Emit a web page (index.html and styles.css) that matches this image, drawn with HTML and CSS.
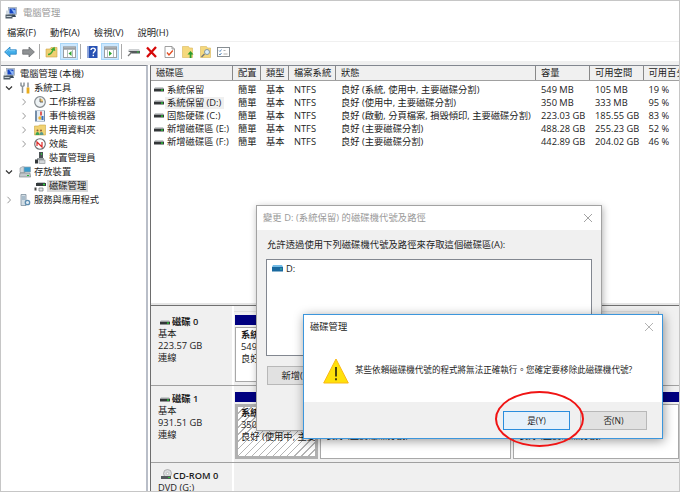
FILE: index.html
```html
<!DOCTYPE html>
<html lang="zh-Hant">
<head>
    <meta charset="UTF-8">
    <meta name="viewport" content="width=device-width, initial-scale=1.0">
    <title>電腦管理</title>
    <link rel="stylesheet" href="styles.css">
</head>
<body>
    <svg class="defs" width="0" height="0">
        <symbol id="computer" viewBox="0 0 12 12">
            <rect x="3.5" y=".5" width="8" height="7" fill="#c9d3dc" stroke="#8998a5" stroke-width=".6"/>
            <rect x="4.5" y="1.5" width="6" height="5" fill="#1747c4"/>
            <path d="M6 1.5l3 5h1.500v-3z" fill="#8bb5f4"/>
            <path d="M7 7.500h3l1 2.500h-4z" fill="#374859"/>
            <path d="M1 3.500h3v4h-3z" fill="#cfd9e2"/>
            <rect x=".5" y="7.500" width="7" height="4" fill="#4f5d68"/>
            <path d="M1.500 9.500h5" stroke="#c8d2d8"/>
        </symbol>
        <symbol id="drive" viewBox="0 0 10 5">
            <path d="M1 0h8l1 2H0z" fill="#c9cccd"/>
            <rect y="1.700" width="10" height="2.800" fill="#333638"/>
            <rect x="7" y="2.400" width="2" height="1.300" fill="#27d836"/>
        </symbol>
        <symbol id="down" viewBox="0 0 8 8"><path d="M1 2.500l3 3 3-3" fill="none" stroke="#333" stroke-width="1.200"/></symbol>
        <symbol id="right" viewBox="0 0 8 8"><path d="M2.500.8l3 3.200-3 3.200" fill="none" stroke="#999" stroke-width="1"/></symbol>
        <symbol id="close" viewBox="0 0 10 10"><path d="M1 1l8 8M9 1L1 9" fill="none" stroke="currentColor" stroke-width=".9"/></symbol>
    </svg>

    <div class="window">
        <div class="titlebar">
            <svg class="app-icon"><use href="#computer"/></svg>
            <span>電腦管理</span>
        </div>
        <div class="menubar">
            <span>檔案(F)</span>
            <span>動作(A)</span>
            <span>檢視(V)</span>
            <span>說明(H)</span>
        </div>
        <div class="toolbar">
            <div class="tool"><svg viewBox="0 0 13 12"><path d="M.6 6L6 1v2.800h6.300v4.400H6V11z" fill="#41ade9" stroke="#2b84c2" stroke-width=".8"/><path d="M2 5.800L5.300 3v1.700h6" fill="none" stroke="#8ed5fb" stroke-width=".7"/></svg></div>
            <div class="tool"><svg viewBox="0 0 13 12"><path d="M12.400 6L7 1v2.800H.7v4.400H7V11z" fill="#8f9294" stroke="#6c6f71" stroke-width=".8"/></svg></div>
            <i class="sep"></i>
            <div class="tool"><svg viewBox="0 0 13 12"><path d="M1 3h4l1-1.500h6V11H1z" fill="#f0cf73" stroke="#cda546" stroke-width=".6"/><path d="M3 8.500c3 0 4-2 5-4.500" fill="none" stroke="#3fa836" stroke-width="1.500"/><path d="M5.500 3.800L9.500.8l.8 4.200z" fill="#3fa836"/></svg></div>
            <div class="tool on"><svg viewBox="0 0 13 12"><rect x=".5" y=".8" width="12" height="10.700" fill="#fff" stroke="#9a9fa3"/><path d="M1 2.500h11" stroke="#9a9fa3" stroke-width="2.500"/><path d="M4.500 4v7M9.500 4v7" stroke="#a3a9ad" stroke-width=".8"/><path d="M8.500 5v5L5.500 7.500z" fill="#31a532"/></svg></div>
            <i class="sep"></i>
            <div class="tool"><svg viewBox="0 0 13 12"><rect x="1.500" y="0" width="10" height="12" fill="#2852b4"/><path d="M2.500 0v12" stroke="#8aa3dc"/><path d="M5 4c0-2.500 4.300-2.500 4.300 0C9.300 5.500 7.300 5.500 7.300 7.500M7.300 8.800v1.500" fill="none" stroke="#fff" stroke-width="1.400"/></svg></div>
            <div class="tool on"><svg viewBox="0 0 13 12"><rect x=".5" y=".8" width="12" height="10.700" fill="#fff" stroke="#9a9fa3"/><path d="M1 2.500h11" stroke="#9a9fa3" stroke-width="2.500"/><path d="M3.500 4v7M9.500 4v7" stroke="#a3a9ad" stroke-width=".8"/><path d="M5 5v5l3-2.500z" fill="#31a532"/></svg></div>
            <i class="sep"></i>
            <div class="tool"><svg viewBox="0 0 13 12"><path d="M2 3h10l1 2H1z" fill="#cdd0d2"/><path d="M1 5h12v2.500H5z" fill="#54595c"/><path d="M4.500 6.500L1 10" stroke="#777" stroke-width="1.300"/><path d="M10 6h2" stroke="#31c33a"/></svg></div>
            <div class="tool"><svg viewBox="0 0 13 12"><path d="M2 1.500l9 9.500M11 1L2 11" stroke="#d60909" stroke-width="2.300"/></svg></div>
            <div class="tool"><svg viewBox="0 0 13 12"><path d="M2 .5h7l2.500 2.500v8.500H2zM9 .5V3h2.500" fill="#fff" stroke="#888" stroke-width=".8"/><path d="M4 6.500l2 2.500 3.800-4.500" fill="none" stroke="#e24c20" stroke-width="1.300"/></svg></div>
            <div class="tool"><svg viewBox="0 0 13 12"><path d="M1.500.5h6l1 1.500h3v9.500h-10z" fill="#f5d87d" stroke="#d9b75c" stroke-width=".6"/><path d="M8.700 12V8.500H6.500L9.500 5l3 3.500h-2V12z" fill="#2c9c2e"/></svg></div>
            <div class="tool"><svg viewBox="0 0 13 12"><path d="M1.500.5h6l1 1.500h3v9.500h-10z" fill="#f5d87d" stroke="#d9b75c" stroke-width=".6"/><path d="M5.500 8L2.500 11" stroke="#777" stroke-width="1.400"/><circle cx="8" cy="6" r="2.500" fill="#dceffa" stroke="#7c8e9b" stroke-width=".9"/></svg></div>
            <div class="tool"><svg viewBox="0 0 13 12"><rect x=".5" y="1.500" width="12" height="9" fill="#fff" stroke="#7b8287" stroke-width=".9"/><path d="M2 4.500l1 1 1.500-2M2 8l1 1 1.500-2" fill="none" stroke="#3675b5" stroke-width=".8"/><path d="M6.500 4.500h2M6.500 8h4" stroke="#999" stroke-width=".8"/></svg></div>
        </div>

        <div class="panes">
            <div class="tree">
                <div class="node root"><svg class="ico"><use href="#computer"/></svg><span>電腦管理 (本機)</span></div>
                <div class="node"><svg class="arrow"><use href="#down"/></svg><svg class="ico" viewBox="0 0 12 12"><path d="M2 .5v3l1.500 1L5 3.500v-3M3.500 4.500V11" fill="none" stroke="#8c9499" stroke-width="1.500"/><path d="M9 .5v5" stroke="#6f767a" stroke-width="1.200"/><path d="M9 5.500v6" stroke="#e9ac1c" stroke-width="2.800"/></svg><span>系統工具</span></div>
                <div class="node sub"><svg class="arrow"><use href="#right"/></svg><svg class="ico" viewBox="0 0 12 12"><circle cx="6" cy="6" r="5.300" fill="#eef3f5" stroke="#858b8f" stroke-width="1.200"/><path d="M6 2.500V6H9A3 3 0 0 0 6 2.500" fill="#f0c66d"/><path d="M6 2.500V6h3" fill="none" stroke="#555" stroke-width=".9"/></svg><span>工作排程器</span></div>
                <div class="node sub"><svg class="arrow"><use href="#right"/></svg><svg class="ico" viewBox="0 0 12 12"><rect x="1" y=".5" width="10" height="11" fill="#758ea9"/><rect x="3" y="1" width="7" height="10" fill="#e5edf5"/><path d="M7 1.500v4" stroke="#db2b25" stroke-width="1.500"/><circle cx="6" cy="8" r="1.700" fill="#efb431"/><rect x="7.500" y="6" width="2" height="4" fill="#3970be"/></svg><span>事件檢視器</span></div>
                <div class="node sub"><svg class="arrow"><use href="#right"/></svg><svg class="ico" viewBox="0 0 12 12"><path d="M.5 2h4l1-1h6v10H.5z" fill="#f1d272" stroke="#cba745" stroke-width=".6"/><circle cx="3.500" cy="6.500" r="1" fill="#8b5a32"/><circle cx="7" cy="6.500" r="1" fill="#8b5a32"/><path d="M1.500 11c0-4 4-4 4 0z" fill="#3da351"/><path d="M5.500 11c0-4 4-4 4 0z" fill="#5a9a8e"/></svg><span>共用資料夾</span></div>
                <div class="node sub"><svg class="arrow"><use href="#right"/></svg><svg class="ico" viewBox="0 0 12 12"><circle cx="6" cy="6" r="5.300" fill="#fff" stroke="#6a6e70" stroke-width="1.100"/><path d="M3 8V4l5 5V4" fill="none" stroke="#dc2826" stroke-width="1.200"/></svg><span>效能</span></div>
                <div class="node sub"><i class="arrow"></i><svg class="ico" viewBox="0 0 12 12"><rect x="5" y="0" width="4" height="6" fill="#4c5356"/><path d="M7.500 1v2" stroke="#35bf42"/><path d="M3 6h7v2H3z" fill="#999fa2"/><rect x="1" y="7.500" width="3" height="4" fill="#33383b"/><rect x="5" y="8" width="6" height="3.500" fill="#d3d7da" stroke="#858b8e" stroke-width=".6"/></svg><span>裝置管理員</span></div>
                <div class="node"><svg class="arrow"><use href="#down"/></svg><svg class="ico" viewBox="0 0 12 12"><path d="M1 2l3-1.500 2 1v5H1z" fill="#d1d6d9" stroke="#8e969a" stroke-width=".6"/><rect x="5" y="1" width="6.500" height="5" fill="#3b9bcc" stroke="#8ea0aa" stroke-width=".7"/><path d="M1 7h10l.7 4H.3z" fill="#c2c8cb" stroke="#747c80" stroke-width=".6"/><path d="M8 9.500h2" stroke="#29b535"/></svg><span>存放裝置</span></div>
                <div class="node sub selected"><i class="arrow"></i><svg class="ico" viewBox="0 0 12 12"><path d="M2 3h10v3H2z" fill="#363c3e"/><path d="M3 2.500h8" stroke="#c1c7c9"/><path d="M9 4.500h2" stroke="#2cd53b" stroke-width="1.300"/><path d="M.5 7.500h2v3h-2z" fill="#444"/><path d="M5 8h4v3H5z" fill="#e3e6e8" stroke="#6f7679" stroke-width=".7"/></svg><span>磁碟管理</span></div>
                <div class="node"><svg class="arrow"><use href="#right"/></svg><svg class="ico" viewBox="0 0 12 12"><path d="M2 .5h5v11H2z" fill="#d3dde4" stroke="#7d919e" stroke-width=".8"/><path d="M3 3h3M3 5h3" stroke="#6a8da5" stroke-width=".8"/><circle cx="8.500" cy="8.500" r="2.200" fill="#e2edf4" stroke="#5d8db1" stroke-width="1.300"/></svg><span>服務與應用程式</span></div>
            </div>

            <div class="content">
                <div class="volumes">
                    <div class="row head"><span>磁碟區</span><span>配置</span><span>類型</span><span>檔案系統</span><span>狀態</span><span>容量</span><span>可用空間</span><span>可用百分比</span></div>
                    <div class="row"><span><svg class="drv"><use href="#drive"/></svg><b>系統保留</b></span><span>簡單</span><span>基本</span><span>NTFS</span><span>良好 (系統, 使用中, 主要磁碟分割)</span><span>549 MB</span><span>105 MB</span><span>19 %</span></div>
                    <div class="row"><span><svg class="drv"><use href="#drive"/></svg><b class="picked">系統保留 (D:)</b></span><span>簡單</span><span>基本</span><span>NTFS</span><span>良好 (使用中, 主要磁碟分割)</span><span>350 MB</span><span>333 MB</span><span>95 %</span></div>
                    <div class="row"><span><svg class="drv"><use href="#drive"/></svg><b>固態硬碟 (C:)</b></span><span>簡單</span><span>基本</span><span>NTFS</span><span>良好 (啟動, 分頁檔案, 損毀傾印, 主要磁碟分割)</span><span>223.03 GB</span><span>185.55 GB</span><span>83 %</span></div>
                    <div class="row"><span><svg class="drv"><use href="#drive"/></svg><b>新增磁碟區 (E:)</b></span><span>簡單</span><span>基本</span><span>NTFS</span><span>良好 (主要磁碟分割)</span><span>488.28 GB</span><span>255.23 GB</span><span>52 %</span></div>
                    <div class="row"><span><svg class="drv"><use href="#drive"/></svg><b>新增磁碟區 (F:)</b></span><span>簡單</span><span>基本</span><span>NTFS</span><span>良好 (主要磁碟分割)</span><span>442.89 GB</span><span>204.02 GB</span><span>46 %</span></div>
                </div>

                <div class="disks">
                    <div class="disk">
                        <div class="disk-label"><h4><svg class="drv"><use href="#drive"/></svg>磁碟 0</h4><p>基本</p><p>223.57 GB</p><p>連線</p></div>
                        <div class="parts short">
                            <div class="part first"><div class="bar"></div><div class="box"><h4>系統保留</h4><p>549 MB</p><p>良好</p></div></div>
                            <div class="part rest"><div class="bar"></div><div class="box"></div></div>
                        </div>
                    </div>
                    <div class="disk">
                        <div class="disk-label"><h4><svg class="drv"><use href="#drive"/></svg>磁碟 1</h4><p>基本</p><p>931.51 GB</p><p>連線</p></div>
                        <div class="parts">
                            <div class="part first"><div class="bar"></div><div class="box hatched"><h4>系統保留</h4><p>350 MB</p><p>良好 (使用中, 主要</p></div></div>
                            <div class="part second"><div class="bar"></div><div class="box"><h4>&nbsp;</h4><p>&nbsp;</p><p>良好 (主要磁碟分割)</p></div></div>
                            <div class="part rest"><div class="bar"></div><div class="box"><h4>&nbsp;</h4><p>&nbsp;</p><p>良好 (主要磁碟分割)</p></div></div>
                        </div>
                    </div>
                    <div class="disk cdrom">
                        <div class="disk-label"><h4><svg class="cd" viewBox="0 0 12 11"><circle cx="7.500" cy="4.500" r="4" fill="#dadddf" stroke="#999" stroke-width=".7"/><circle cx="7.500" cy="4.500" r="1.200" fill="#fff" stroke="#999" stroke-width=".5"/><path d="M1 7h10v3H1z" fill="#555b5e"/><path d="M8 8.500h2" stroke="#31cc3e"/></svg>CD-ROM 0</h4><p>DVD (G:)</p></div>
                    </div>
                </div>
            </div>
        </div>
    </div>

    <div class="dialog paths">
        <div class="dialog-title"><span>變更 D: (系統保留) 的磁碟機代號及路徑</span><svg class="close"><use href="#close"/></svg></div>
        <p class="hint">允許透過使用下列磁碟機代號及路徑來存取這個磁碟區(A):</p>
        <div class="path-list"><svg viewBox="0 0 11 7"><path d="M1 0h9l1 2H0z" fill="#75bce6"/><path d="M0 2h11v4.500H0z" fill="#19699f"/><path d="M8 4h2" stroke="#42c6a0"/></svg><span>D:</span></div>
        <button class="btn">新增(D)...</button>
    </div>

    <div class="dialog confirm">
        <div class="dialog-title"><span>磁碟管理</span><svg class="close"><use href="#close"/></svg></div>
        <div class="message">
            <svg viewBox="0 0 26 26"><path d="M13 1L25.300 25H.7z" fill="#ffe10a" stroke="#f9b716" stroke-width="1"/><path d="M13 9v9.500M13 20.300v2" stroke="#111" stroke-width="1.500"/></svg>
            <p>某些依賴磁碟機代號的程式將無法正確執行。您確定要移除此磁碟機代號?</p>
        </div>
        <div class="actions">
            <button class="btn primary">是(Y)</button>
            <button class="btn">否(N)</button>
        </div>
    </div>
    <div class="marker"></div>
</body>
</html>
```
FILE: styles.css
```css
* {
    margin: 0;
    padding: 0;
    box-sizing: border-box;
}

body {
    width: 680px;
    height: 492px;
    overflow: hidden;
    position: relative;
    font-family: "Open Sans", "Noto Sans CJK TC", sans-serif;
    font-size: 9.3px;
    line-height: 12px;
    color: #1c1c1c;
    background: #fff;
    white-space: nowrap;
}

.defs {
    position: absolute;
}

svg {
    flex: none;
}

.window {
    height: 492px;
    border: 1px solid #c6c6c6;
    display: flex;
    flex-direction: column;
}

.titlebar {
    height: 24px;
    display: flex;
    align-items: center;
    gap: 6px;
    padding-left: 4px;
    color: #999;
}

.app-icon {
    width: 12px;
    height: 12px;
}

.menubar {
    height: 17px;
    display: flex;
    align-items: center;
    gap: 14px;
    padding-left: 6px;
    border-bottom: 1px solid #f0f0f0;
}

.toolbar {
    height: 19px;
    display: flex;
    align-items: center;
}

.tool {
    width: 18px;
    height: 17px;
    display: flex;
    align-items: center;
    justify-content: center;
}

.tool svg {
    width: 13px;
    height: 12px;
}

.tool.on {
    background: #cce8ff;
    border: 1px solid #a9d6f7;
}

.sep {
    width: 1px;
    height: 15px;
    margin: 0 2px;
    background: #aaa;
}

.panes {
    flex: 1;
    min-height: 0;
    display: flex;
    border-top: 4px solid #f0f0f0;
}

.tree {
    width: 147px;
    padding-top: 1px;
    border-top: 1px solid #828790;
    border-right: 2px solid #b9bec8;
}

.node {
    height: 14.05px;
    display: flex;
    align-items: center;
    padding-left: 4px;
}

.node.root {
    padding-left: 2px;
}

.node.sub {
    padding-left: 19px;
}

.node span {
    padding: 0 2px;
    margin-left: 1px;
}

.root span {
    margin-left: 3px;
}

.node .ico {
    width: 12px;
    height: 12px;
}

.node .arrow {
    width: 8px;
    height: 8px;
    margin-right: 6px;
}

.selected span {
    background: #d9d9d9;
}

.content {
    flex: 1;
    min-width: 0;
    margin-left: 2px;
    display: flex;
    flex-direction: column;
    border-left: 1px solid #6d6d6d;
    border-top: 1px solid #828790;
}

.volumes {
    height: 239px;
    overflow: hidden;
    border-bottom: 2px solid #e5e5e5;
}

.row {
    display: grid;
    grid-template-columns: 82px 28px 28px 47px 200px 54px 53.5px 1fr;
    height: 13.2px;
    align-items: center;
}

.row span {
    display: flex;
    align-items: center;
    padding-left: 5px;
    overflow: hidden;
}

.row:not(.head) span:first-child {
    padding-left: 3px;
}

.head {
    height: 15px;
    margin-bottom: 2px;
    background: #f0f0f0;
    border-bottom: 1px solid #a0a0a0;
}

.head span {
    height: 14px;
    border-right: 1px solid #888;
}

.head span:last-child {
    border-right: none;
}

.row b {
    font-weight: normal;
    padding: 0 3px 0 2px;
    margin-left: 1px;
}

.picked {
    background: #f0f0f0;
}

.drv {
    width: 10px;
    height: 5px;
}

.disks {
    flex: 1;
    min-height: 0;
    overflow: hidden;
    background: #f0f0f0;
    border-top: 1px solid #707070;
}

.disk {
    height: 80px;
    display: flex;
    border-bottom: 1px solid #a0a0a0;
}

.disk + .disk {
    height: 77px;
}

.disk-label {
    width: 83px;
    padding: 10px 0 0 7px;
    border-right: 2px solid #fff;
}

.disk + .disk .disk-label {
    padding-top: 7px;
}

.disk h4 {
    font-weight: 600;
}

.disk h4,
.disk p {
    height: 12px;
    line-height: 12px;
}

.disk-label h4 {
    display: flex;
    align-items: center;
    gap: 2px;
    padding-left: 2px;
}

.cd {
    width: 12px;
    height: 11px;
}

.disk-label .cd {
    margin: -4px -1px 0 0;
}

.parts {
    flex: 1;
    display: flex;
    gap: 2px;
    padding: 6px 0 3px 1px;
    min-width: 0;
}

.parts.short {
    flex: none;
    width: 425px;
    margin-top: 5px;
    padding-top: 3px;
    border-top: 1px solid #dedede;
    border-right: 1px solid #a8a8a8;
}

.part {
    display: flex;
    flex-direction: column;
    gap: 2px;
    overflow: hidden;
}

.first {
    width: 83px;
}

.second {
    width: 191px;
}

.rest {
    flex: 1;
}

.bar {
    height: 10px;
    background: #000080;
}

.box {
    flex: 1;
    padding: 1px 0 0 5px;
    background: #fff;
    border: 1px solid #a8a8a8;
    overflow: hidden;
}

.hatched {
    padding: 0 0 0 3px;
    border: 3px solid #b0b0b0;
    background: repeating-linear-gradient(135deg, #fff 0, #fff 4px, #b4b4b4 4px, #b4b4b4 5px);
}

.dialog {
    position: absolute;
    background: #f0f0f0;
    display: flex;
    flex-direction: column;
}

.dialog-title {
    display: flex;
    align-items: center;
    justify-content: space-between;
    height: 24px;
    padding: 0 8px 0 6px;
    background: #fff;
}

.close {
    width: 10px;
    height: 10px;
}

.paths {
    left: 256px;
    top: 205px;
    width: 346px;
    height: 226px;
    border: 1px solid #a2a2a2;
    box-shadow: 1px 2px 7px rgba(0, 0, 0, 0.3);
}

.paths .dialog-title {
    color: #999;
}

.paths .dialog-title span {
    letter-spacing: 0.07px;
}

.hint {
    margin: 9px 0 0 10px;
    letter-spacing: 0.05px;
}

.path-list {
    display: flex;
    align-items: flex-start;
    gap: 3px;
    width: 326px;
    height: 97px;
    margin: 8px 0 10px 9px;
    padding: 3px 5px;
    background: #fff;
    border: 1px solid #828790;
}

.path-list svg {
    width: 11px;
    height: 7px;
    margin-top: 2px;
}

.btn {
    width: 67px;
    height: 19px;
    font: inherit;
    color: inherit;
    background: #e1e1e1;
    border: 1px solid #b8b8b8;
}

.paths .btn {
    margin-left: 10px;
}

.confirm {
    left: 303px;
    top: 314px;
    width: 360px;
    height: 125px;
    border: 1px solid #3c96dc;
    box-shadow: 1px 2px 10px rgba(0, 0, 0, 0.4);
}

.confirm .close {
    color: #aaa;
}

.message {
    flex: 1;
    display: flex;
    gap: 6px;
    padding: 19px 0 0 19px;
    background: #fff;
}

.message svg {
    width: 26px;
    height: 26px;
}

.message p {
    margin-top: 6px;
    font-size: 8.55px;
}

.actions {
    height: 36px;
    display: flex;
    justify-content: flex-end;
    gap: 10px;
    padding: 9px 15px 0 0;
    font-size: 8.6px;
}

.primary {
    background: #e5f1fb;
    border-color: #2a8ddd;
}

.marker {
    position: absolute;
    left: 495px;
    top: 391px;
    width: 89px;
    height: 56px;
    border: 2px solid #f01414;
    border-radius: 50%;
}
```
